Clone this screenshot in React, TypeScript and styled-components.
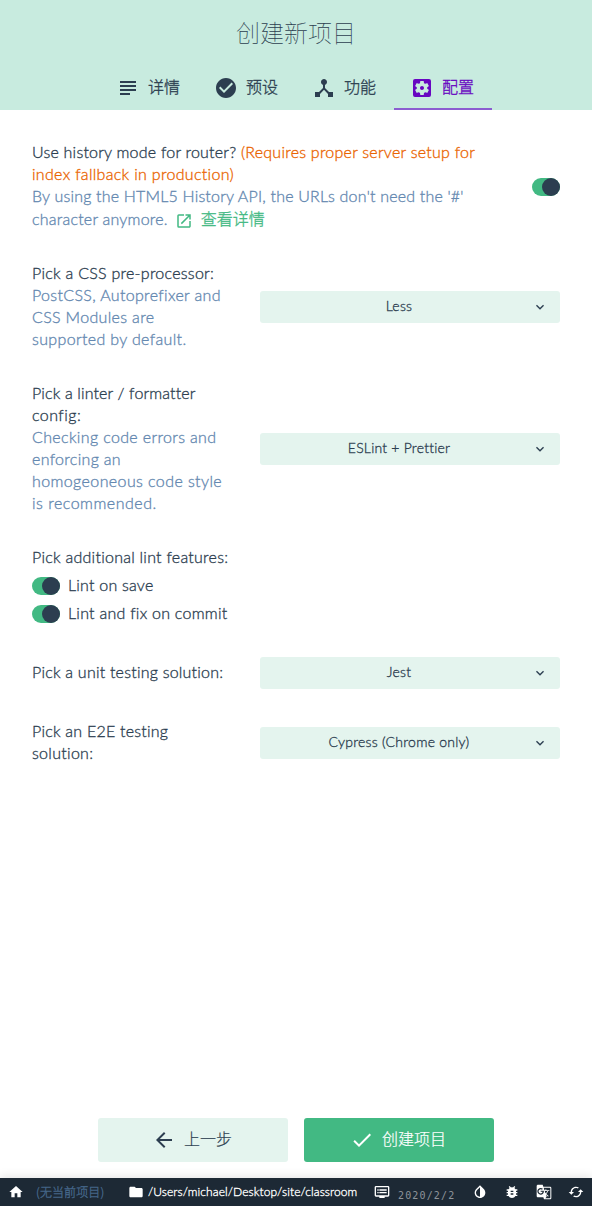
import React from "react";
import styled, { createGlobalStyle } from "styled-components";
import {
  MdSubject, MdCheckCircle, MdDeviceHub, MdSettingsApplications, MdOpenInNew,
  MdKeyboardArrowDown, MdArrowBack, MdCheck, MdHome, MdFolder, MdDvr,
  MdInvertColors, MdBugReport, MdGTranslate, MdCached,
} from "react-icons/md";

const GlobalStyle = createGlobalStyle`
  * { box-sizing: border-box; }
  body {
    margin: 0;
    background: #fff;
    color: #2c3e50;
    font: 300 16px/20px Lato, "Noto Sans CJK SC", sans-serif;
    -webkit-text-stroke: 0.32px currentColor;
  }
`;

const Page = styled.div`
  display: flex;
  flex-direction: column;
  height: 1206px;
`;

const Header = styled.header`
  display: flex;
  flex-direction: column;
  height: 110px;
  background: #c8ebdf;
`;

const Title = styled.h1`
  margin: 0;
  height: 66px;
  text-align: center;
  font: 100 24px/63px "Noto Sans CJK SC", sans-serif;
  -webkit-text-stroke: 0;
`;

const Tabs = styled.nav`
  display: flex;
  justify-content: center;
`;

const Tab = styled.div<{ $active?: boolean }>`
  display: flex;
  align-items: center;
  gap: 8px;
  width: 98px;
  height: 44px;
  padding: 2px 0 0 16px;
  border-bottom: 2px solid ${(p) => (p.$active ? "#8b5dd0" : "transparent")};
  color: ${(p) => (p.$active ? "#6806c1" : "#2c3e50")};
  font-family: "Noto Sans CJK SC", sans-serif;
  white-space: nowrap;

  svg { flex: none; }
  span { padding-bottom: 4px; }
`;

const Content = styled.main`
  flex: 1;
  display: flex;
  flex-direction: column;
  gap: 32px;
  padding: 32px 32px 0;
`;

const Field = styled.section`
  display: flex;
  align-items: center;
  justify-content: space-between;
`;

const FieldGroup = styled.section`
  display: flex;
  flex-direction: column;
  margin-bottom: -3px;
`;

const GroupTitle = styled.div`
  height: 25px;
`;

const ToggleRow = styled.div`
  display: flex;
  align-items: center;
  gap: 8px;
  height: 28px;

  span:last-child { padding-bottom: 2px; }
`;

const Label = styled.div`
  white-space: nowrap;
`;

const tones = { text: "#2c3e50", muted: "#6488b0", warning: "#ea6400" };

const Line = styled.div`
  height: 22px;
`;

const Copy = styled.span<{ $tone?: keyof typeof tones; $track?: number }>`
  color: ${(p) => tones[p.$tone ?? "text"]};
  letter-spacing: ${(p) => p.$track ?? 0}px;
`;

const LinkLine = styled.div`
  display: flex;
  align-items: center;
  height: 23px;
  padding-bottom: 2px;
`;

const Link = styled.a`
  display: flex;
  align-items: center;
  gap: 8px;
  margin-left: 7px;
  color: #42b983;
  font-family: "Noto Sans CJK SC", sans-serif;

  svg { margin-top: 4px; }
  span { padding-bottom: 2px; }
`;

const Switch = styled.span`
  display: flex;
  flex: none;
  justify-content: flex-end;
  width: 28px;
  height: 18px;
  border-radius: 9px;
  background: #42b983;

  &::after {
    content: "";
    width: 18px;
    height: 18px;
    border-radius: 50%;
    background: #2c3e50;
  }
`;

const SelectBox = styled.div<{ $track: number }>`
  display: flex;
  flex: none;
  align-items: center;
  gap: 6px;
  width: 300px;
  height: 32px;
  padding: 0 12px;
  border-radius: 3px;
  background: #e4f4ee;
  font-size: 14px;
  letter-spacing: ${(p) => p.$track}px;

  span { flex: 1; padding-bottom: 2px; text-align: center; }
`;

const Actions = styled.div`
  display: flex;
  justify-content: center;
  gap: 16px;
  padding-bottom: 16px;
`;

const Button = styled.button<{ $primary?: boolean }>`
  display: flex;
  align-items: center;
  justify-content: center;
  gap: 8px;
  width: 190px;
  height: 44px;
  padding: 0 2px 0 0;
  border: 0;
  border-radius: 3px;
  background: ${(p) => (p.$primary ? "#42b983" : "#e4f4ee")};
  color: ${(p) => (p.$primary ? "#fff" : "#2c3e50")};
  font: 300 16px/22px "Noto Sans CJK SC", sans-serif;
  -webkit-text-stroke: 0.2px currentColor;

  span { padding-bottom: 4px; }
`;

const StatusBar = styled.footer`
  display: flex;
  align-items: center;
  height: 28px;
  padding-left: 8px;
  background: #1d2935;
  box-shadow: 0 -2px 10px rgba(0, 0, 0, 0.1);
  color: #fff;
  font-size: 12px;
  white-space: nowrap;
`;

const Project = styled.span`
  width: 92px;
  margin-left: 12px;
  color: #46688c;
  font-family: "Noto Sans CJK SC", sans-serif;
  letter-spacing: 0.1px;
`;

const Path = styled.span`
  width: 226px;
  margin-left: 4px;
  letter-spacing: 0.09px;
`;

const LogDate = styled.span`
  width: 74px;
  margin: 8px 0 0 8px;
  color: #8e949a;
  font: 10px/14px "DejaVu Sans Mono", monospace;
  letter-spacing: 1.15px;
  -webkit-text-stroke: 0;
`;

const Tools = styled.div`
  display: flex;
  gap: 16px;
`;

function Select({ value, track }: { value: string; track: number }) {
  return (
    <SelectBox $track={track}>
      <span>{value}</span>
      <MdKeyboardArrowDown size={16} />
    </SelectBox>
  );
}

export default function App() {
  return (
    <Page>
      <GlobalStyle />
      <Header>
        <Title>创建新项目</Title>
        <Tabs>
          <Tab><MdSubject size={24} /><span>详情</span></Tab>
          <Tab><MdCheckCircle size={24} /><span>预设</span></Tab>
          <Tab><MdDeviceHub size={24} /><span>功能</span></Tab>
          <Tab $active><MdSettingsApplications size={24} /><span>配置</span></Tab>
        </Tabs>
      </Header>
      <Content>
        <Field>
          <Label>
            <Line>
              <Copy $track={0.22}>Use history mode for router? </Copy>
              <Copy $tone="warning" $track={0.24}>(Requires proper server setup for</Copy>
            </Line>
            <Line><Copy $tone="warning" $track={0.31}>index fallback in production)</Copy></Line>
            <Line><Copy $tone="muted" $track={0.19}>By using the HTML5 History API, the URLs don't need the '#'</Copy></Line>
            <LinkLine>
              <Copy $tone="muted" $track={0.22}>character anymore.</Copy>
              <Link><MdOpenInNew size={18} /><span>查看详情</span></Link>
            </LinkLine>
          </Label>
          <Switch />
        </Field>
        <Field>
          <Label>
            <Line><Copy $track={0.26}>Pick a CSS pre-processor:</Copy></Line>
            <Line><Copy $tone="muted" $track={0.33}>PostCSS, Autoprefixer and</Copy></Line>
            <Line><Copy $tone="muted" $track={0.33}>CSS Modules are</Copy></Line>
            <Line><Copy $tone="muted" $track={0.35}>supported by default.</Copy></Line>
          </Label>
          <Select value="Less" track={0.25} />
        </Field>
        <Field>
          <Label>
            <Line><Copy $track={0.14}>Pick a linter / formatter</Copy></Line>
            <Line><Copy $track={0.45}>config:</Copy></Line>
            <Line><Copy $tone="muted" $track={0.35}>Checking code errors and</Copy></Line>
            <Line><Copy $tone="muted" $track={0.31}>enforcing an</Copy></Line>
            <Line><Copy $tone="muted" $track={0.4}>homogeoneous code style</Copy></Line>
            <Line><Copy $tone="muted" $track={0.5}>is recommended.</Copy></Line>
          </Label>
          <Select value="ESLint + Prettier" track={0.22} />
        </Field>
        <FieldGroup>
          <GroupTitle><Copy $track={0.25}>Pick additional lint features:</Copy></GroupTitle>
          <ToggleRow><Switch /><Copy $track={0.22}>Lint on save</Copy></ToggleRow>
          <ToggleRow><Switch /><Copy $track={0.25}>Lint and fix on commit</Copy></ToggleRow>
        </FieldGroup>
        <Field>
          <Label><Line><Copy $track={0.22}>Pick a unit testing solution:</Copy></Line></Label>
          <Select value="Jest" track={0.2} />
        </Field>
        <Field>
          <Label>
            <Line><Copy $track={0.22}>Pick an E2E testing</Copy></Line>
            <Line><Copy $track={0.3}>solution:</Copy></Line>
          </Label>
          <Select value="Cypress (Chrome only)" track={0.25} />
        </Field>
      </Content>
      <Actions>
        <Button><MdArrowBack size={24} /><span>上一步</span></Button>
        <Button $primary><MdCheck size={24} /><span>创建项目</span></Button>
      </Actions>
      <StatusBar>
        <MdHome size={16} />
        <Project>(无当前项目)</Project>
        <MdFolder size={16} />
        <Path>/Users/michael/Desktop/site/classroom</Path>
        <MdDvr size={16} />
        <LogDate>2020/2/2</LogDate>
        <Tools>
          <MdInvertColors size={16} />
          <MdBugReport size={16} />
          <MdGTranslate size={16} />
          <MdCached size={16} />
        </Tools>
      </StatusBar>
    </Page>
  );
}
